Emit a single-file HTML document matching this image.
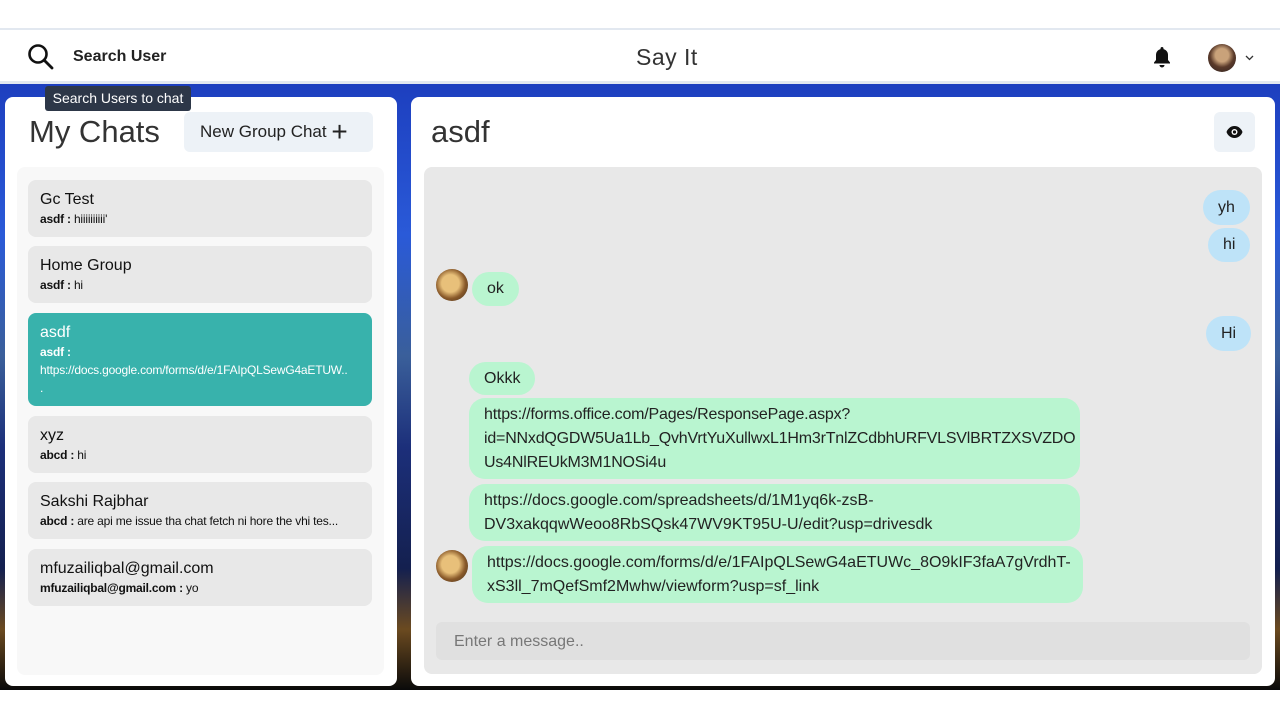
<!DOCTYPE html>
<html><head><style>
*{box-sizing:border-box;margin:0;padding:0}
body{width:1280px;height:720px;overflow:hidden;background:#fff;font-family:"Liberation Sans",sans-serif;position:relative;color:#1a202c}
.abs{position:absolute}
.bg{left:0;top:84px;width:1280px;height:606px;background:linear-gradient(180deg,#1d3fbf 0%,#2a5ad8 25%,#3a5f9a 45%,#1c2f7a 60%,#14204f 80%,#6b4a20 90%,#0a0a0a 100%)}
.hdr{left:0;top:28px;width:1280px;height:56px;background:#fff;border-top:2px solid #e2e8f0;border-bottom:3px solid #e2e8f0}
.panel{background:#fff;border-radius:8px}
.item{position:absolute;left:28px;width:344px;background:#e8e8e8;border-radius:8px;padding:11px 12px;font-family:"Liberation Sans",sans-serif}
.item .t{font-size:16px;color:#111}
.item .s{font-size:12px;margin-top:3px;color:#111;letter-spacing:-0.2px}
.item .s b{font-weight:bold}
.sel{background:#38b2ac}
.sel .t,.sel .s{color:#fff}
.b{position:absolute;border-radius:18px;font-size:16px;padding:0 15px;line-height:24px;color:#222;font-family:"Liberation Sans",sans-serif;display:flex;align-items:center}
.bl{background:#bee3f8}.gr{background:#b9f5d0}
.av{position:absolute;width:32px;height:32px;border-radius:50%;background:radial-gradient(circle at 45% 45%,#e8c07a 0 35%,#8a5a2a 60%,#3a2a1a)}
</style></head><body>
<div class="abs bg"></div>
<div class="abs hdr"></div>
<svg class="abs" style="left:27px;top:43px" width="28" height="28" viewBox="0 0 28 28"><circle cx="11" cy="11" r="8.5" fill="none" stroke="#111" stroke-width="2.6"/><line x1="17" y1="17" x2="25" y2="25" stroke="#111" stroke-width="2.8" stroke-linecap="round"/></svg>
<div class="abs" style="left:73px;top:48px;font-size:16px;font-weight:bold;color:#222">Search User</div>
<div class="abs" style="left:636px;top:44px;font-size:23px;color:#333;letter-spacing:0.5px">Say It</div>
<svg class="abs" style="left:1152px;top:46px" width="20" height="22" viewBox="0 0 20 22"><path d="M10 1c-1 0-1.5.7-1.5 1.5v.6C5.5 3.8 4 6.3 4 9v5l-2 2.5v1h16v-1L16 14V9c0-2.7-1.5-5.2-4.5-5.9v-.6C11.5 1.7 11 1 10 1zM7.5 19a2.5 2.5 0 0 0 5 0z" fill="#111"/></svg>
<div class="av" style="left:1208px;top:44px;width:28px;height:28px;background:radial-gradient(circle at 50% 40%,#c9a27a 0 30%,#5a3a2a 55%,#2a2020)"></div>
<svg class="abs" style="left:1245px;top:55px" width="9" height="6" viewBox="0 0 9 6"><path d="M1 1l3.5 3.5L8 1" fill="none" stroke="#333" stroke-width="1.3"/></svg>

<div class="abs panel" style="left:5px;top:97px;width:392px;height:589px"></div>
<div class="abs" style="left:29px;top:114px;font-size:31px;color:#333;font-weight:300">My Chats</div>
<div class="abs" style="left:184px;top:112px;width:189px;height:40px;background:#edf2f7;border-radius:6px;font-size:17px;line-height:40px;padding-left:16px;color:#222">New Group Chat <span style="font-size:28px;vertical-align:-4px">+</span></div>
<div class="abs" style="left:17px;top:167px;width:367px;height:508px;background:#f8f8f8;border-radius:8px"></div>
<div class="item" style="top:180px;height:57px"><div class="t">Gc Test</div><div class="s"><b>asdf :</b> hiiiiiiiiii'</div></div>
<div class="item" style="top:246px;height:57px"><div class="t">Home Group</div><div class="s"><b>asdf :</b> hi</div></div>
<div class="item sel" style="top:313px;height:93px"><div class="t">asdf</div><div class="s" style="line-height:18px;margin-top:1px"><b>asdf :</b><br>https://docs.google.com/forms/d/e/1FAIpQLSewG4aETUW..<br>.</div></div>
<div class="item" style="top:416px;height:57px"><div class="t">xyz</div><div class="s"><b>abcd :</b> hi</div></div>
<div class="item" style="top:482px;height:57px"><div class="t">Sakshi Rajbhar</div><div class="s"><b>abcd :</b> are api me issue tha chat fetch ni hore the vhi tes...</div></div>
<div class="item" style="top:549px;height:57px"><div class="t">mfuzailiqbal@gmail.com</div><div class="s"><b>mfuzailiqbal@gmail.com :</b> yo</div></div>

<div class="abs panel" style="left:411px;top:97px;width:864px;height:589px"></div>
<div class="abs" style="left:431px;top:114px;font-size:31px;color:#333;font-weight:300">asdf</div>
<div class="abs" style="left:1214px;top:112px;width:41px;height:40px;background:#edf2f7;border-radius:6px"></div>
<svg class="abs" style="left:1226px;top:125px" width="17" height="14" viewBox="0 0 17 14"><path d="M8.5 1C4.5 1 1.5 4 .5 7c1 3 4 6 8 6s7-3 8-6c-1-3-4-6-8-6z" fill="#111"/><circle cx="8.5" cy="7" r="3" fill="#fff"/><circle cx="8.5" cy="7" r="1.6" fill="#111"/></svg>
<div class="abs" style="left:424px;top:167px;width:838px;height:507px;background:#e8e8e8;border-radius:8px"></div>
<div class="b bl" style="left:1203px;top:190px;height:35px">yh</div>
<div class="b bl" style="left:1208px;top:228px;height:34px">hi</div>
<div class="av" style="left:436px;top:269px"></div>
<div class="b gr" style="left:472px;top:272px;height:34px">ok</div>
<div class="b bl" style="left:1206px;top:316px;height:35px">Hi</div>
<div class="b gr" style="left:469px;top:362px;height:33px">Okkk</div>
<div class="b gr" style="left:469px;top:398px;width:611px;height:81px;border-radius:16px;letter-spacing:-0.2px">https://forms.office.com/Pages/ResponsePage.aspx?<br>id=NNxdQGDW5Ua1Lb_QvhVrtYuXullwxL1Hm3rTnlZCdbhURFVLSVlBRTZXSVZDO<br>Us4NlREUkM3M1NOSi4u</div>
<div class="b gr" style="left:469px;top:484px;width:611px;height:57px;border-radius:16px">https://docs.google.com/spreadsheets/d/1M1yq6k-zsB-<br>DV3xakqqwWeoo8RbSQsk47WV9KT95U-U/edit?usp=drivesdk</div>
<div class="av" style="left:436px;top:550px"></div>
<div class="b gr" style="left:472px;top:546px;width:611px;height:57px;border-radius:16px">https://docs.google.com/forms/d/e/1FAIpQLSewG4aETUWc_8O9kIF3faA7gVrdhT-<br>xS3ll_7mQefSmf2Mwhw/viewform?usp=sf_link</div>
<div class="abs" style="left:436px;top:622px;width:814px;height:38px;background:#e0e0e0;border-radius:6px;font-size:16px;line-height:40px;padding-left:18px;color:#777">Enter a message..</div>

<div class="abs" style="left:95px;top:80px;width:0;height:0;border:6px solid transparent;border-bottom-color:#2d3748"></div>
<div class="abs" style="left:45px;top:86px;width:146px;height:25px;background:#2d3748;border-radius:3px;color:#fff;font-size:14px;line-height:25px;text-align:center">Search Users to chat</div>
</body></html>
